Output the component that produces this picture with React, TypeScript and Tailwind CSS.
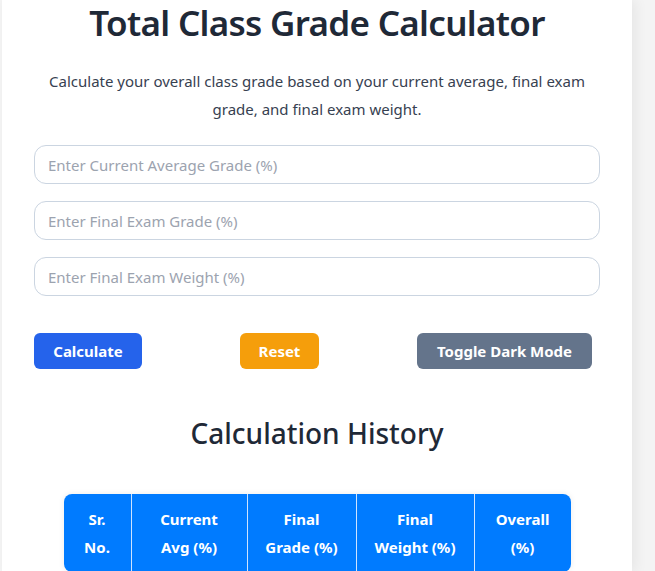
import React, { useState } from 'react';

const font = { fontFamily: '"Noto Sans", "Open Sans", sans-serif' };

export default function App() {
  const [avg, setAvg] = useState('');
  const [grade, setGrade] = useState('');
  const [weight, setWeight] = useState('');

  return (
    <div className="min-h-screen bg-[#f4f4f4] pl-[2px]" style={font}>
      <div className="w-[630px] min-h-[571px] bg-white shadow-[4px_0_12px_rgba(0,0,0,0.06)] px-8">
        <h1 className="pt-[3px] text-center text-[35px] leading-[40px] font-semibold tracking-[-0.02em] text-[#1f2937]">
          Total Class Grade Calculator
        </h1>
        <p className="mt-[24px] text-center text-[15px] leading-7 text-[#374151]">
          Calculate your overall class grade based on your current average, final exam grade, and final exam weight.
        </p>

        <div className="mt-[22px] flex flex-col gap-[17px]">
          <input
            value={avg}
            onChange={(e) => setAvg(e.target.value)}
            placeholder="Enter Current Average Grade (%)"
            className="h-[39px] w-full rounded-xl border border-[#cbd5e1] px-[13px] text-[15px] placeholder:text-[#9ca3af] outline-none"
          />
          <input
            value={grade}
            onChange={(e) => setGrade(e.target.value)}
            placeholder="Enter Final Exam Grade (%)"
            className="h-[39px] w-full rounded-xl border border-[#cbd5e1] px-[13px] text-[15px] placeholder:text-[#9ca3af] outline-none"
          />
          <input
            value={weight}
            onChange={(e) => setWeight(e.target.value)}
            placeholder="Enter Final Exam Weight (%)"
            className="h-[39px] w-full rounded-xl border border-[#cbd5e1] px-[13px] text-[15px] placeholder:text-[#9ca3af] outline-none"
          />
        </div>

        <div className="mt-[37px] flex w-[558px] justify-between">
          <button className="h-9 w-[108px] rounded-md bg-[#2563eb] text-[15px] font-bold text-white">Calculate</button>
          <button className="h-9 w-[79px] rounded-md bg-[#f59e0b] text-[15px] font-bold text-white">Reset</button>
          <button className="h-9 w-[175px] rounded-md bg-[#64748b] text-[15px] font-bold text-white">Toggle Dark Mode</button>
        </div>

        <h2 className="mt-[46px] text-center text-[28px] leading-9 font-medium text-[#1f2937]">Calculation History</h2>

        <div className="mt-[43px] flex justify-center">
          <table className="w-[507px] border-separate border-spacing-0 overflow-hidden rounded-lg shadow-[0_0_6px_rgba(0,0,0,0.08)]">
            <thead>
              <tr className="bg-[#007bff] text-white text-[15px] font-bold leading-7">
                <th className="w-[67px] px-2 py-[11px] font-bold">Sr.<br />No.</th>
                <th className="w-[116px] px-2 py-[11px] font-bold border-l border-[#cfe3ff]">Current<br />Avg (%)</th>
                <th className="w-[109px] px-2 py-[11px] font-bold border-l border-[#cfe3ff]">Final<br />Grade (%)</th>
                <th className="w-[118px] px-2 py-[11px] font-bold border-l border-[#cfe3ff]">Final<br />Weight (%)</th>
                <th className="w-[97px] px-2 py-[11px] font-bold border-l border-[#cfe3ff]">Overall<br />(%)</th>
              </tr>
            </thead>
            <tbody />
          </table>
        </div>
      </div>
    </div>
  );
}
